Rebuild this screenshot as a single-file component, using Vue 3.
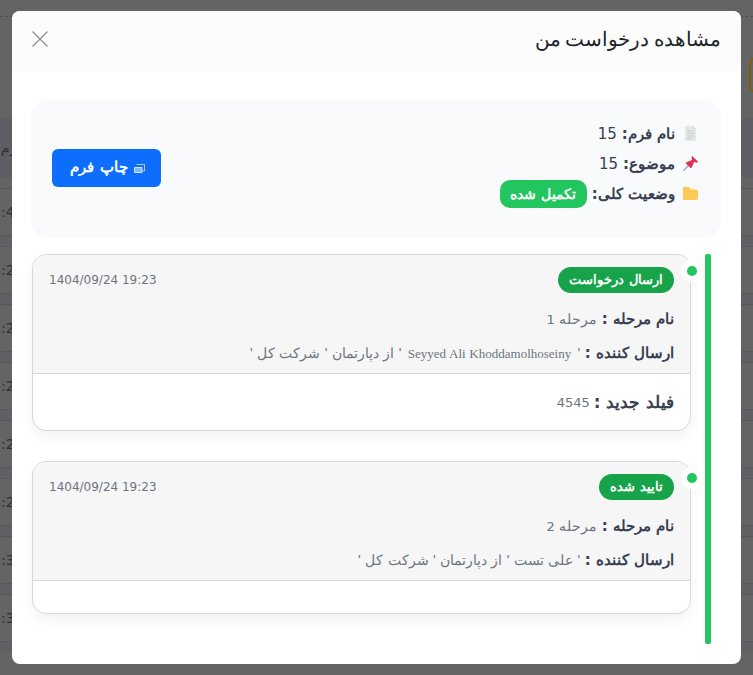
<template>
  <div class="page">
    <div class="bg-top"></div>
    <div class="bg-head"></div>
    <div class="bg-band-dark"><span class="bg-text">زم</span></div>
    <div class="bg-gap"></div>
    <div v-for="t in bgTimes" :key="t.id" class="bg-row">
      <div class="bg-cell"><span class="bg-text">{{ t.text }}</span></div>
      <div class="bg-stripe"></div>
    </div>
    <span class="bg-button"></span>

    <div class="modal" dir="rtl">
      <header class="modal-header">
        <h2 class="modal-title">مشاهده درخواست من</h2>
        <button class="close" aria-label="close">
          <svg width="16" height="16" viewBox="0 0 16 16">
            <path d="M.5.5l15 15M15.5.5l-15 15" stroke="#8c8c8c" stroke-width="1.2" fill="none" />
          </svg>
        </button>
      </header>
      <div class="modal-body">
        <section class="summary">
          <div class="summary-info">
            <div class="info-row">
              <svg class="emoji" viewBox="0 0 15 15">
                <path d="M2 0h8l3 3v12H2z" fill="#e6e7e8" />
                <path d="M10 0l3 3h-3z" fill="#ccd6dd" />
                <path d="M4 5h7M4 7.500h7M4 10h7M4 12.500h5" stroke="#c4ccd2" stroke-width="1" />
              </svg>
              <b>نام فرم<span class="num">:</span></b><span class="num">15</span>
            </div>
            <div class="info-row">
              <svg class="emoji" viewBox="0 0 15 15">
                <path d="M.5 14.500L6 9" stroke="#9aa5ad" stroke-width="1.300" />
                <path d="M9 0l6.500 6-2 .5L11 6 9.500 10 8 12.500 2.500 7 5 5.500 9 4l-.5-2z" fill="#e0315c" />
              </svg>
              <b>موضوع<span class="num">:</span></b><span class="num">15</span>
            </div>
            <div class="info-row">
              <svg class="emoji" viewBox="0 0 15 15">
                <path d="M0 1h6l2 2.500h5.500L15 5v7l-1 2H0z" fill="#ffc957" />
              </svg>
              <b>وضعیت کلی<span class="num">:</span></b>
              <span class="status">تکمیل شده</span>
            </div>
          </div>
          <button class="print">
            <svg class="print-icon" viewBox="0 0 11 9">
              <path d="M2.500.5h8v6.500H8" fill="none" stroke="#a9c9ff" stroke-width="1" />
              <path d="M.5 3.500h7.500v5H.5z" fill="#86b3fe" stroke="#d6e5ff" stroke-width="1" />
            </svg>
            چاپ فرم
          </button>
        </section>
        <div class="timeline">
          <article v-for="s in steps" :key="s.step" class="step">
            <span class="dot-wrap"><span class="dot"></span></span>
            <div class="step-head">
              <div class="step-top">
                <span class="badge">{{ s.badge }}</span>
                <span class="date num" dir="ltr">1404/09/24 19:23</span>
              </div>
              <div class="line">
                <b>نام مرحله <span class="num">:</span></b>
                <span class="muted"> مرحله <span class="num small">{{ s.step }}</span></span>
              </div>
              <div class="line">
                <b>ارسال کننده <span class="num">:</span></b>
                <span class="muted"> ' <span :class="{ latin: s.latin }">{{ s.sender }}</span> ' از دپارتمان ' شرکت کل '</span>
              </div>
            </div>
            <div class="step-body">
              <div v-if="s.field" class="field">
                <b>فیلد جدید <span class="num">:</span></b>
                <span class="muted num small">{{ s.field }}</span>
              </div>
            </div>
          </article>
        </div>
      </div>
    </div>
  </div>
</template>

<script setup>
const bgTimes = [
  { id: 1, text: ':4' },
  { id: 2, text: ':2' },
  { id: 3, text: ':2' },
  { id: 4, text: ':2' },
  { id: 5, text: ':2' },
  { id: 6, text: ':2' },
  { id: 7, text: ':3' },
  { id: 8, text: ':3' },
]

const steps = [
  { step: 1, badge: 'ارسال درخواست', sender: 'Seyyed Ali Khoddamolhoseiny', latin: true, field: '4545' },
  { step: 2, badge: 'تایید شده', sender: 'علی تست', latin: false, field: '' },
]
</script>

<style scoped>
.page {
  position: relative;
  width: 753px;
  height: 675px;
  overflow: hidden;
  background: #636463;
  font-family: "Liberation Sans", sans-serif;
  color: #212529;
}

.bg-top {
  height: 16px;
  border-bottom: 1px dashed #4f5052;
}

.bg-head {
  height: 101px;
}

.bg-band-dark {
  height: 60px;
  background: #5e5f64;
  display: flex;
  align-items: center;
}

.bg-gap {
  height: 10px;
}

.bg-row {
  border-top: 1px solid #56575b;
}

.bg-cell {
  height: 46px;
  display: flex;
  align-items: center;
}

.bg-stripe {
  height: 10px;
  border-top: 1px solid #58595d;
  background: #5f6063;
}

.bg-text {
  margin-left: 1px;
  font-family: "DejaVu Sans", sans-serif;
  font-size: 14px;
  color: #2f3032;
}

.bg-button {
  position: absolute;
  left: 749px;
  top: 57px;
  width: 20px;
  height: 32px;
  border: 2px solid #7d5e10;
  border-radius: 7px;
}

.modal {
  position: absolute;
  left: 12px;
  top: 11px;
  width: 729px;
  height: 653px;
  background: #fff;
  border-radius: 8px;
  overflow: hidden;
}

.modal-header {
  height: 60px;
  box-sizing: border-box;
  background: #fcfcfc;
  display: flex;
  align-items: center;
  justify-content: space-between;
  padding: 0 20px 4px 20px;
}

.modal-title {
  margin: 0;
  font-size: 20px;
  font-weight: 400;
  word-spacing: -1px;
  color: #212529;
}

.close {
  border: 0;
  background: none;
  padding: 0;
  width: 16px;
  height: 16px;
  display: flex;
}

.modal-body {
  padding: 29px 20px 0 30px;
}

.summary {
  position: relative;
  height: 137px;
  box-sizing: border-box;
  margin-left: -11px;
  background: #f8fafc;
  border-radius: 16px;
  padding: 0 23px 10px 21px;
  display: flex;
  align-items: center;
}

.summary-info {
  display: flex;
  flex-direction: column;
  gap: 8px;
  font-size: 15px;
  color: #374151;
}

.info-row {
  display: flex;
  align-items: center;
  gap: 5px;
  height: 22px;
}

.info-row b {
  word-spacing: 1px;
}

.emoji {
  width: 15px;
  height: 15px;
  margin-left: 3px;
}

.num {
  font-family: "DejaVu Sans", sans-serif;
}

.small {
  font-size: 13px;
}

.latin {
  margin: 0 2px;
  font-family: "Liberation Serif", serif;
  font-size: 13px;
}

.status {
  background: #22c55e;
  color: #fff;
  font-size: 14px;
  font-weight: 700;
  word-spacing: 1px;
  padding: 4px 10.500px;
  height: 28px;
  box-sizing: border-box;
  line-height: 20px;
  border-radius: 10px;
}

.print {
  position: absolute;
  left: 21px;
  top: 49px;
  display: flex;
  align-items: center;
  justify-content: center;
  gap: 6px;
  background: #0d6efd;
  color: #fff;
  border: 0;
  border-radius: 6px;
  width: 109px;
  height: 38px;
  padding: 0 0 3px 2px;
  font-family: inherit;
  font-size: 14.500px;
  font-weight: 700;
  word-spacing: 1px;
}

.print-icon {
  width: 11px;
  height: 9px;
  margin-top: 3px;
}

.timeline {
  position: relative;
  box-sizing: border-box;
  margin: 17px 10px 0 -10px;
  padding-right: 20px;
  height: 390px;
  display: flex;
  flex-direction: column;
  gap: 30px;
}

.timeline::before {
  content: "";
  position: absolute;
  right: 0;
  top: 0;
  bottom: 0;
  width: 6px;
  background: #22c55e;
  border-radius: 2px;
}

.step {
  position: relative;
  border: 1px solid #d5d7dc;
  border-radius: 14px;
  background: #fff;
  box-shadow: 0 6px 14px rgba(0, 0, 0, 0.05);
}

.dot-wrap {
  position: absolute;
  right: -13px;
  top: 5px;
  width: 22px;
  height: 22px;
  background: #fff;
  border-radius: 50%;
  display: flex;
  align-items: center;
  justify-content: center;
}

.dot {
  width: 10px;
  height: 10px;
  border-radius: 50%;
  background: #22c55e;
}

.step-head {
  background: #f6f6f7;
  border-bottom: 1px solid #d5d7dc;
  border-radius: 13px 13px 0 0;
  padding: 12px 16px 0;
  height: 119px;
  box-sizing: border-box;
}

.step-top {
  display: flex;
  align-items: center;
  justify-content: space-between;
  height: 26px;
  margin-bottom: 14px;
}

.badge {
  background: #16a34a;
  color: #fff;
  font-size: 13px;
  font-weight: 700;
  word-spacing: 2px;
  height: 26px;
  line-height: 26px;
  padding: 0 10.500px;
  border-radius: 13px;
}

.date {
  font-size: 12px;
  color: #6c757d;
}

.line {
  font-size: 15px;
  height: 34px;
  line-height: 24px;
  color: #374151;
}

.line b {
  word-spacing: 1px;
}

.step-body {
  padding: 16px 16px 0;
  min-height: 16px;
}

.field {
  display: flex;
  align-items: center;
  gap: 4px;
  height: 24px;
  margin-bottom: 16px;
  color: #374151;
}

.field b {
  font-size: 17px;
  word-spacing: 1px;
}

.muted {
  font-size: 14px;
  font-weight: 400;
  color: #6c757d;
  word-spacing: 0.500px;
}

.muted.small {
  font-size: 13px;
}
</style>

<style>
html, body { margin: 0; background: #636463; }
</style>
